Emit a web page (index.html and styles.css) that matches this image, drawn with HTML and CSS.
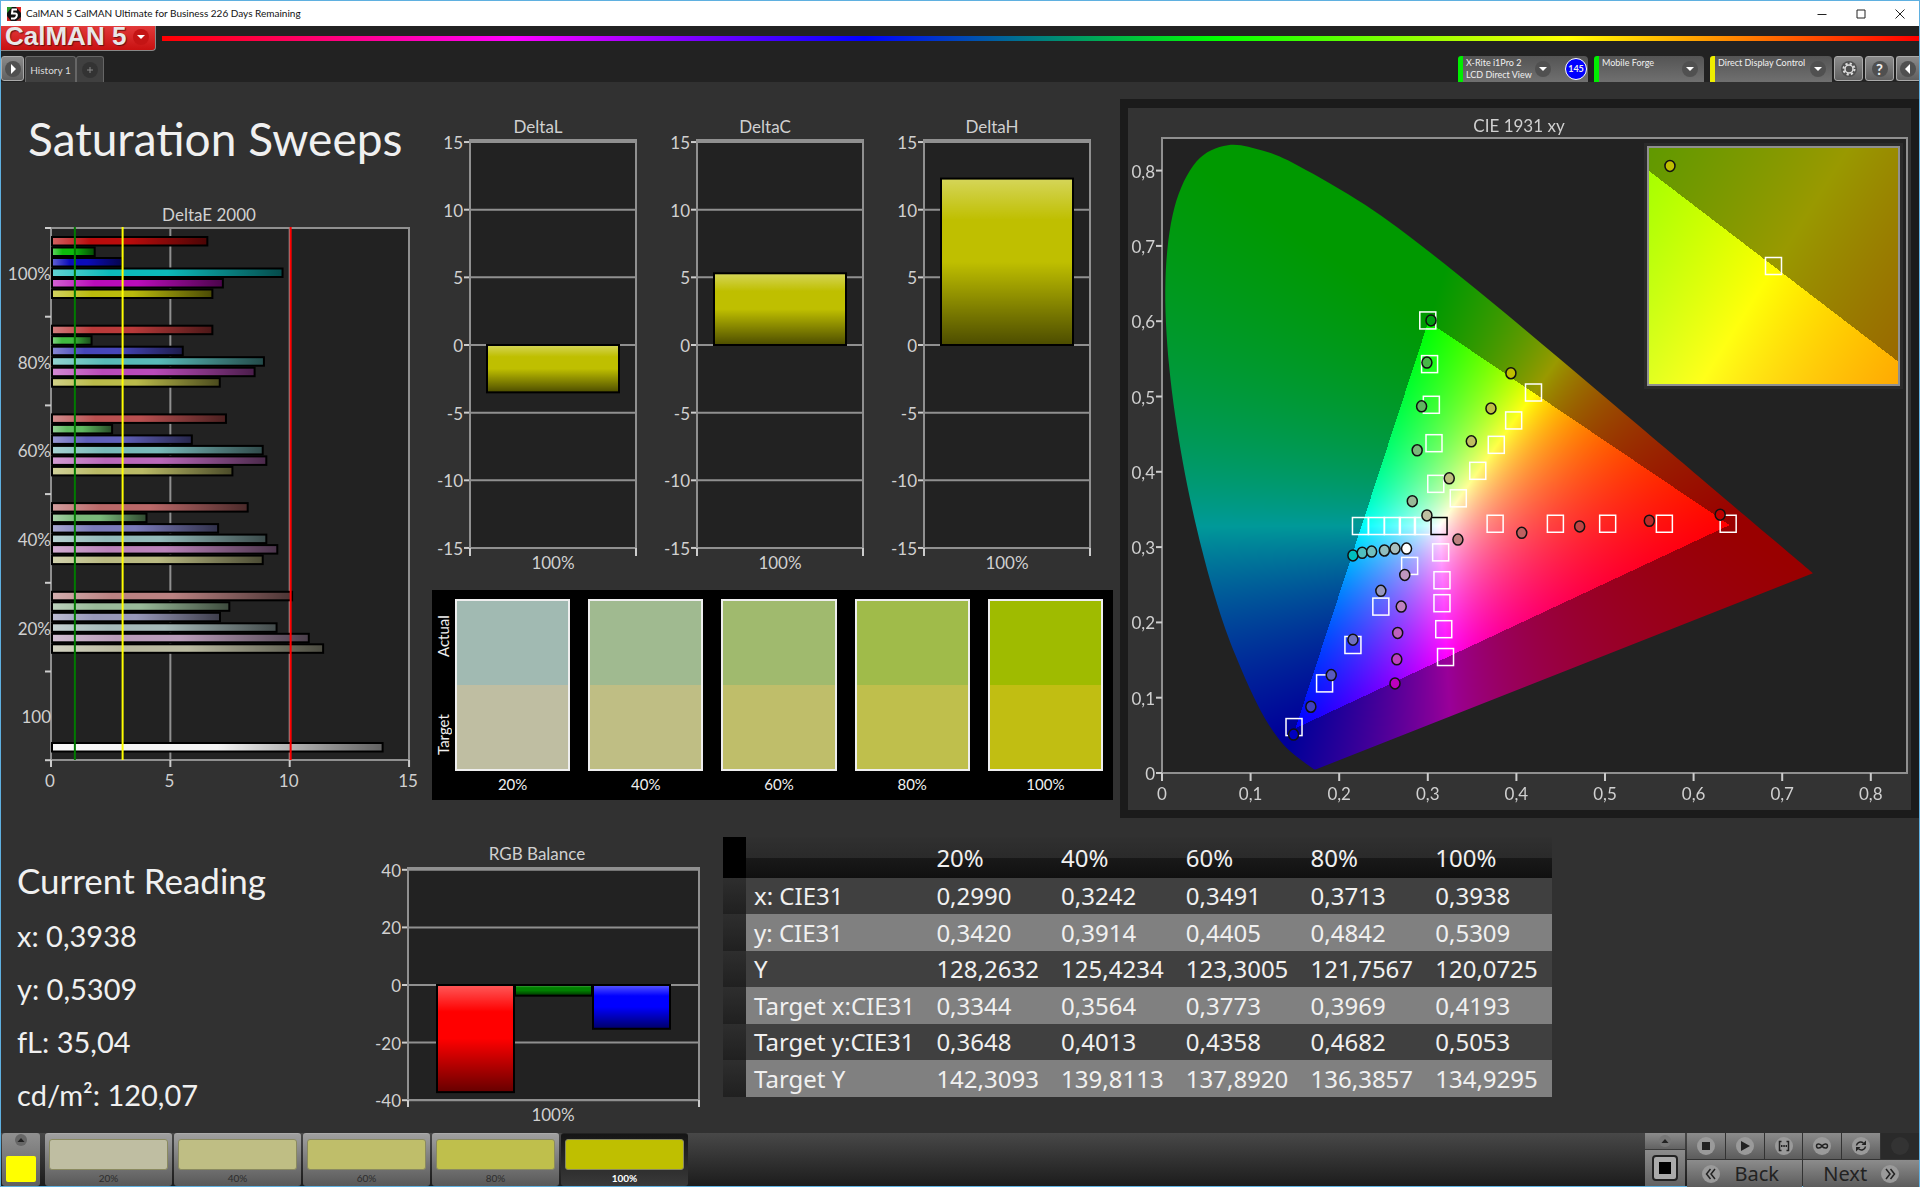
FILE: index.html
```
<!DOCTYPE html>
<html lang="en">
<head>
<meta charset="utf-8">
<meta name="viewport" content="width=device-width, initial-scale=1">
<title>CalMAN 5</title>
<link rel="stylesheet" href="styles.css">
</head>
<body>
<div class="app">
  <div class="titlebar">
    <svg class="app-icon" viewBox="0 0 14 14">
      <rect width="14" height="14" fill="#111"/>
      <path d="M0 0h5L0 6z" fill="#2a9d2a"/><path d="M14 0v6L9 0z" fill="#d22"/><path d="M0 14V9l4 5z" fill="#c22"/><path d="M14 14h-5l5-4z" fill="#933"/>
      <path d="M10 2.500H5.500L5 6.500h3.200q2 0 1.600 2.200T7.500 11.500H4" fill="none" stroke="#fff" stroke-width="2"/>
    </svg>
    <span class="window-title">CalMAN 5 CalMAN Ultimate for Business 226 Days Remaining</span>
    <button class="win-btn" aria-label="Minimize"><svg viewBox="0 0 10 10"><path d="M0.500 5.500h9"/></svg></button>
    <button class="win-btn" aria-label="Maximize"><svg viewBox="0 0 10 10"><path d="M1 1h8v8H1z"/></svg></button>
    <button class="win-btn" aria-label="Close"><svg viewBox="0 0 10 10"><path d="M0.500 0.500l9 9M9.500 0.500l-9 9"/></svg></button>
  </div>

  <header class="header">
    <button class="logo">CalMAN 5 <span class="round"><svg viewBox="0 0 16 16"><path d="M4 6h8l-4 4z" fill="#fff"/></svg></span></button>
    <div class="rainbow"></div>
  </header>

  <nav class="toolbar">
    <button class="tool-btn tool-first" aria-label="Expand"><span class="round"><svg viewBox="0 0 16 16"><path d="M6 3l5 5-5 5z" fill="#fff"/></svg></span></button>
    <button class="tab">History 1</button>
    <button class="tab tab-add" aria-label="Add tab"><span class="round"><svg viewBox="0 0 16 16"><path d="M8 5v6M5 8h6" stroke="#888"/></svg></span></button>
    <div class="spacer"></div>
    <button class="device meter">
      <span class="device-name">X-Rite i1Pro 2<br>LCD Direct View</span>
      <span class="round"><svg viewBox="0 0 16 16"><path d="M4 6h8l-4 4z" fill="#fff"/></svg></span>
      <span class="count">145</span>
    </button>
    <div class="device source">
      <select aria-label="Source"><option>Mobile Forge</option></select>
      <span class="round"><svg viewBox="0 0 16 16"><path d="M4 6h8l-4 4z" fill="#fff"/></svg></span>
    </div>
    <div class="device display">
      <select aria-label="Display"><option>Direct Display Control</option></select>
      <span class="round"><svg viewBox="0 0 16 16"><path d="M4 6h8l-4 4z" fill="#fff"/></svg></span>
    </div>
    <button class="tool-btn" aria-label="Settings"><span class="round"><svg viewBox="0 0 16 16"><circle cx="8" cy="8" r="4" fill="none" stroke="#ddd" stroke-width="1.500"/><circle cx="8" cy="8" r="5.500" fill="none" stroke="#ddd" stroke-width="2" stroke-dasharray="2.200 2.120"/></svg></span></button>
    <button class="tool-btn help"><span class="round">?</span></button>
    <button class="tool-btn tool-last" aria-label="Collapse"><span class="round"><svg viewBox="0 0 16 16"><path d="M10 3L5 8l5 5z" fill="#fff"/></svg></span></button>
  </nav>

  <main class="main">
    <section class="top-row">
      <div class="col-left">
        <h1>Saturation Sweeps</h1>
        <svg class="chart" id="delta-e" viewBox="0 0 424 600"></svg>
      </div>
      <div class="col-middle">
        <div class="delta-charts">
          <svg class="chart" id="delta-l" viewBox="0 0 227 463"></svg>
          <svg class="chart" id="delta-c" viewBox="0 0 227 463"></svg>
          <svg class="chart" id="delta-h" viewBox="0 0 227 463"></svg>
        </div>
        <div class="compare">
          <div class="compare-side"><span>Target</span><span>Actual</span></div>
          <div class="patches">
            <figure class="patch"><div class="patch-box"><i class="a20"></i><i class="t20"></i></div><figcaption>20%</figcaption></figure>
            <figure class="patch"><div class="patch-box"><i class="a40"></i><i class="t40"></i></div><figcaption>40%</figcaption></figure>
            <figure class="patch"><div class="patch-box"><i class="a60"></i><i class="t60"></i></div><figcaption>60%</figcaption></figure>
            <figure class="patch"><div class="patch-box"><i class="a80"></i><i class="t80"></i></div><figcaption>80%</figcaption></figure>
            <figure class="patch"><div class="patch-box"><i class="a100"></i><i class="t100"></i></div><figcaption>100%</figcaption></figure>
          </div>
        </div>
      </div>
      <div class="cie">
        <canvas id="cie-gamut" width="783" height="702"></canvas>
        <svg class="chart" id="cie-points" viewBox="0 0 783 702"></svg>
      </div>
    </section>

    <section class="bottom-row">
      <div class="reading">
        <h2>Current Reading</h2>
        <p>x: 0,3938</p>
        <p>y: 0,5309</p>
        <p>fL: 35,04</p>
        <p>cd/m²: 120,07</p>
      </div>
      <svg class="chart rgb-chart" id="rgb-balance" viewBox="0 0 340 290"></svg>
      <div class="table-wrap">
        <table class="values">
          <thead>
            <tr><td></td><td></td><th>20%</th><th>40%</th><th>60%</th><th>80%</th><th>100%</th></tr>
          </thead>
          <tbody>
            <tr><td></td><th>x: CIE31</th><td>0,2990</td><td>0,3242</td><td>0,3491</td><td>0,3713</td><td>0,3938</td></tr>
            <tr><td></td><th>y: CIE31</th><td>0,3420</td><td>0,3914</td><td>0,4405</td><td>0,4842</td><td>0,5309</td></tr>
            <tr><td></td><th>Y</th><td>128,2632</td><td>125,4234</td><td>123,3005</td><td>121,7567</td><td>120,0725</td></tr>
            <tr><td></td><th>Target x:CIE31</th><td>0,3344</td><td>0,3564</td><td>0,3773</td><td>0,3969</td><td>0,4193</td></tr>
            <tr><td></td><th>Target y:CIE31</th><td>0,3648</td><td>0,4013</td><td>0,4358</td><td>0,4682</td><td>0,5053</td></tr>
            <tr><td></td><th>Target Y</th><td>142,3093</td><td>139,8113</td><td>137,8920</td><td>136,3857</td><td>134,9295</td></tr>
          </tbody>
        </table>
      </div>
    </section>
  </main>

  <footer class="footer">
    <button class="current" aria-label="Current color">
      <svg viewBox="0 0 12 12"><circle cx="6" cy="6" r="6" fill="#666"/><path d="M2.500 8L6 4l3.500 4z" fill="#222"/></svg>
      <i></i>
    </button>
    <button class="step"><i class="t20"></i>20%</button>
    <button class="step"><i class="t40"></i>40%</button>
    <button class="step"><i class="t60"></i>60%</button>
    <button class="step"><i class="t80"></i>80%</button>
    <button class="step active"><i class="t100"></i>100%</button>
    <div class="spacer"></div>
    <div class="pattern">
      <button aria-label="More"><svg viewBox="0 0 12 12"><circle cx="6" cy="6" r="6" fill="#777"/><path d="M2.500 8L6 4l3.500 4z" fill="#222"/></svg></button>
      <button class="window-btn" aria-label="Window"><svg viewBox="0 0 28 28"><rect x="2" y="2" width="24" height="24" rx="3" fill="#aaa" stroke="#222" stroke-width="2"/><rect x="8" y="8" width="12" height="12" fill="#000"/></svg></button>
    </div>
    <div class="transport">
      <button aria-label="Stop"><svg viewBox="0 0 18 18"><path d="M5 5h8v8H5z"/></svg></button>
      <button aria-label="Play"><svg viewBox="0 0 18 18"><path d="M5 4l9 5-9 5z"/></svg></button>
      <button aria-label="Series"><svg viewBox="0 0 18 18"><path class="line" d="M6.500 4.500h-2v9h2M11.500 4.500h2v9h-2"/><path d="M6 8h1.500v2H6zM8.300 8h1.500v2H8.300zM10.600 8H12v2h-1.400z"/></svg></button>
      <button aria-label="Continuous"><svg viewBox="0 0 18 18"><path class="line" d="M9 9C7.500 6.500 3.500 6 3.500 9S7.500 11.500 9 9s5.500-3 5.500 0S10.500 11.500 9 9z"/></svg></button>
      <button aria-label="Refresh"><svg viewBox="0 0 18 18"><path class="line" d="M4.500 8.500C5 5 9 4 11.500 6.200M13.500 9.500C13 13 9 14 6.500 11.800"/><path d="M14 3.500V8H9.500zM4 14.500V10h4.500z"/></svg></button>
      <button class="off" aria-label="Record" disabled><svg viewBox="0 0 18 18"></svg></button>
      <button class="wide back"><svg viewBox="0 0 18 18"><path class="line" d="M8.500 4l-4 5 4 5M13 4L9 9l4 5"/></svg>Back</button>
      <button class="wide">Next<svg viewBox="0 0 18 18"><path class="line" d="M9.500 4l4 5-4 5M5 4l4 5-4 5"/></svg></button>
    </div>
  </footer>
</div>
<script src="charts.js"></script>
</body>
</html>
```

FILE: styles.css
```
* {
  box-sizing: border-box;
}
body {
  margin: 0;
  background: #313131;
  font-family: Lato, Calibri, sans-serif;
  color: #f0f0f0;
}
button, select {
  font: inherit;
  color: inherit;
  border: none;
  margin: 0;
  padding: 0;
  background: none;
}
svg, canvas {
  display: block;
}
.app {
  min-height: 100vh;
  display: flex;
  flex-direction: column;
  border: 1px solid #5fb0e0;
}
.spacer {
  flex: 1;
}

/* window title */
.titlebar {
  height: 25px;
  background: #fff;
  color: #111;
  display: flex;
  align-items: center;
  padding-left: 6px;
  font-size: 10px;
}
.app-icon {
  width: 14px;
  height: 14px;
  margin-right: 5px;
}
.window-title {
  flex: 1;
  padding-bottom: 2px;
}
.win-btn {
  width: 39px;
  height: 25px;
  display: flex;
  align-items: center;
  justify-content: center;
}
.win-btn svg {
  width: 10px;
  height: 10px;
  fill: none;
  stroke: #222;
}

/* logo and spectrum */
.header {
  background: #222;
  display: flex;
  height: 30px;
}
.logo {
  width: 155px;
  height: 25px;
  display: flex;
  align-items: center;
  justify-content: space-between;
  padding: 0 6px 3px 4px;
  border: 1px solid #888;
  border-top: none;
  border-left: none;
  border-radius: 0 0 4px 0;
  background: linear-gradient(#e23a3a, #c81010);
  font: bold 26px "Liberation Sans", Arial, sans-serif;
  color: #e8e8e8;
  text-shadow: 1px 1px 1px #611;
}
.logo .round {
  background: #c41414;
}
.rainbow {
  flex: 1;
  height: 5px;
  margin: 10px 0 0 6px;
  background: linear-gradient(to right, #f00, #f0f 20%, #00f 40%, #0f0 60%, #ff0 80%, #f00);
}

/* tabs and devices */
.round {
  width: 16px;
  height: 16px;
  border-radius: 50%;
  background: #505050;
  flex: none;
}
.toolbar {
  height: 26px;
  background: #222;
  display: flex;
  font-size: 10px;
}
.tool-btn {
  width: 29px;
  height: 25px;
  margin-left: 2px;
  border: 1px solid #aaa;
  border-radius: 3px;
  background: linear-gradient(#8a8a8a, #606060);
  display: flex;
  align-items: center;
  justify-content: center;
}
.tool-first {
  width: 23px;
  margin: 0 1px 0 0;
}
.tool-last {
  width: 23px;
  border-right: none;
  border-radius: 3px 0 0 3px;
}
.help .round {
  font-size: 15px;
  font-weight: bold;
  line-height: 16px;
}
.tab {
  width: 51px;
  border: 1px solid #666;
  border-bottom: none;
  border-radius: 3px 3px 0 0;
  background: #404040;
  color: #ddd;
}
.tab-add {
  width: 28px;
  padding-left: 5px;
}
.tab-add .round {
  display: block;
  background: #333;
}
.device {
  display: flex;
  align-items: center;
  margin-right: 6px;
  padding-right: 6px;
  border-left: 5px solid #0e0;
  border-radius: 3px 4px 0 0;
  background: linear-gradient(#545454, #707070);
  font-size: 9px;
  text-align: left;
  line-height: 12px;
}
.device select {
  flex: 1;
  min-width: 0;
  height: 26px;
  padding: 0 0 12px 3px;
  appearance: none;
  line-height: 12px;
}
.meter {
  width: 130px;
  padding-right: 1px;
}
.device-name {
  flex: 1;
  padding-left: 3px;
  white-space: nowrap;
}
.count {
  flex: none;
  width: 22px;
  height: 22px;
  margin-left: 14px;
  border: 1px solid #fff;
  border-radius: 50%;
  background: #00f;
  font-weight: bold;
  line-height: 20px;
  text-align: center;
}
.source {
  width: 110px;
}
.display {
  width: 122px;
  margin-right: 0;
  border-left-color: #ee0;
}

/* charts */
.main {
  flex: 1;
}
.top-row {
  display: grid;
  grid-template-columns: 424fr 695fr 799fr;
  align-items: start;
}
h1 {
  margin: 0;
  padding: 29px 0 33px 27px;
  font-size: 46px;
  font-weight: normal;
  line-height: 56px;
}
.chart {
  width: 100%;
  height: auto;
}
.chart text {
  font-size: 17px;
  fill: #d0d0d0;
}
.chart .title, .chart .mid {
  text-anchor: middle;
}
.chart .end {
  text-anchor: end;
}
.chart .plot {
  fill: #222;
}
.chart .frame, .chart .grid {
  fill: none;
  stroke: #909090;
  stroke-width: 2;
}
.chart .tick {
  stroke: #ccc;
  stroke-width: 2;
}
.col-middle {
  padding: 30px 14px 0 0;
}
.delta-charts {
  display: grid;
  grid-template-columns: repeat(3, 1fr);
}
.compare {
  display: flex;
  margin: 15px -7px 0 7px;
  padding: 9px 10px 0 2px;
  height: 210px;
  background: #000;
}
.compare-side {
  display: flex;
  justify-content: space-between;
  width: 18px;
  height: 172px;
  margin-right: 3px;
  padding: 16px 0;
  writing-mode: vertical-rl;
  transform: rotate(180deg);
  font-size: 15px;
  line-height: 18px;
}
.patches {
  flex: 1;
  display: grid;
  grid-template-columns: repeat(5, 1fr);
  column-gap: 18px;
}
.patch {
  margin: 0;
  text-align: center;
  font-size: 15px;
}
.patch-box {
  height: 172px;
  border: 2px solid #eee;
  display: flex;
  flex-direction: column;
}
.patch-box i {
  flex: 1;
}
.patch figcaption {
  line-height: 26px;
}
.a20 { background: #a1bab2; }
.a40 { background: #a0ba90; }
.a60 { background: #a0ba6e; }
.a80 { background: #a0bb4a; }
.a100 { background: #9fbb00; }
.t20 { background: #bfbea2; }
.t40 { background: #bfbe84; }
.t60 { background: #bfbe6a; }
.t80 { background: #bfbf4c; }
.t100 { background: #c1be12; }
.cie {
  display: grid;
  margin-top: 17px;
  padding: 9px 8px 8px;
  background: #1b1b1b;
}
.cie > * {
  grid-area: 1 / 1;
  width: 100%;
  height: auto;
}
.cie canvas {
  background: #333;
}

/* readings */
.bottom-row {
  display: grid;
  grid-template-columns: 365fr 340fr 846fr 367fr;
  align-items: start;
}
.reading {
  padding: 40px 0 0 16px;
}
h2 {
  margin: 0 0 7px;
  font-size: 35px;
  font-weight: normal;
  line-height: 44px;
}
.reading p {
  margin: 0;
  font-size: 29px;
  line-height: 53px;
}
.rgb-chart {
  margin-top: 22px;
}
.table-wrap {
  padding: 19px 0 0 17px;
}
.values {
  width: 100%;
  table-layout: fixed;
  border-collapse: collapse;
  font: 24px "Noto Sans", "Segoe UI", sans-serif;
}
.values th, .values td {
  height: 36px;
  padding: 0 0 0 8px;
  font-weight: normal;
  line-height: 34px;
  text-align: left;
  white-space: nowrap;
}
.values thead td, .values thead th {
  height: 41px;
  background: linear-gradient(#303030, #2a2a2a 50%, #191919 50%, #101010);
}
.values tr > :first-child {
  width: 23px;
  padding: 0;
  background: linear-gradient(#2e2e2e, #202020);
}
.values thead tr > :first-child {
  background: #000;
}
.values tr > :nth-child(2) {
  width: 22%;
}
.values tbody tr {
  background: #404040;
}
.values tbody tr:nth-child(even) {
  background: #808080;
}
.values tbody tr:nth-child(even) td {
  height: 37px;
}

/* bottom bar */
.footer {
  height: 53px;
  display: flex;
  gap: 2px;
  padding-left: 1px;
  background: linear-gradient(#484848, #1c1c1c);
}
.current {
  width: 38px;
  margin-right: 3px;
  border-radius: 3px;
  background: linear-gradient(#909090, #606060);
  display: flex;
  flex-direction: column;
  align-items: center;
  justify-content: space-between;
  padding: 1px 0 4px;
}
.current svg {
  width: 12px;
  height: 12px;
}
.current i {
  width: 30px;
  height: 26px;
  border-radius: 2px;
  background: #ff0;
}
.step {
  width: 127px;
  padding: 4px 4px 0;
  border-top: 1px solid #aaa;
  border-radius: 3px;
  background: linear-gradient(#a0a0a0, #585858);
  color: #2c2c2c;
  font-size: 10px;
  line-height: 16px;
}
.step i {
  display: block;
  height: 31px;
  border: 1px solid #8a8a60;
  border-radius: 3px;
}
.step.active {
  border-color: #222;
  background: linear-gradient(#151515, #3a3a3a);
  color: #fff;
  font-weight: bold;
}
.step .t100 {
  background: #bfbf00;
}
.pattern {
  width: 40px;
  display: grid;
  grid-template-rows: 16px 1fr;
  gap: 1px;
}
.pattern button {
  display: flex;
  align-items: center;
  justify-content: center;
  background: linear-gradient(#8c8c8c, #626262);
}
.pattern svg {
  width: 12px;
}
.pattern .window-btn svg {
  width: 28px;
}
.transport {
  width: 232px;
  display: grid;
  grid-template-columns: repeat(6, 1fr);
  grid-template-rows: 26px 1fr;
  gap: 1px;
  background: #333;
}
.transport button {
  display: flex;
  align-items: center;
  justify-content: center;
  background: linear-gradient(#8c8c8c, #5c5c5c);
  color: #222;
}
.transport svg {
  width: 18px;
  height: 18px;
  border-radius: 50%;
  background: #9a9a9a;
  fill: #222;
}
.transport .line {
  fill: none;
  stroke: #222;
  stroke-width: 1.500;
}
.transport .off {
  background: #2a2a2a;
}
.transport .off svg {
  background: #333;
}
.transport .wide {
  grid-column: span 3;
  gap: 14px;
  font: 20px "Noto Sans", "Segoe UI", sans-serif;
}
.transport .back {
  padding-right: 8px;
}
```

FILE: charts.js
```
// shared shading laid over every bar
const shade = (id, dir) => `
  <linearGradient id="${id}" x1="0" y1="0" x2="${dir === 'h' ? 1 : 0}" y2="${dir === 'h' ? 0 : 1}">
    <stop offset="0" stop-color="#fff" stop-opacity="0.35"/>
    <stop offset="0.25" stop-color="#fff" stop-opacity="0"/>
    <stop offset="0.5" stop-color="#000" stop-opacity="0"/>
    <stop offset="1" stop-color="#000" stop-opacity="0.6"/>
  </linearGradient>`;

const line = (x1, y1, x2, y2, cls) => `<line x1="${x1}" y1="${y1}" x2="${x2}" y2="${y2}" class="${cls}"/>`;
const text = (x, y, str, cls) => `<text x="${x}" y="${y}" class="${cls}">${str}</text>`;
const bar = (x, y, w, h, color, grad) =>
  `<rect x="${x}" y="${y}" width="${w}" height="${h}" fill="${color}"/>
   <rect x="${x}" y="${y}" width="${w}" height="${h}" fill="url(#${grad})" stroke="#000" stroke-width="2"/>`;

function drawDeltaE() {
  const data = [
    ['100%', [6.55, 1.83, 2.99, 9.7, 7.2, 6.76], ['#ba0c0c', '#0cba0c', '#0c0cba', '#0cbaba', '#ba0cba', '#baba0c']],
    ['80%', [6.76, 1.7, 5.52, 8.92, 8.53, 7.07], ['#ba3a3a', '#40ba40', '#4646ba', '#58bab8', '#ba4aba', '#baba4a']],
    ['60%', [7.33, 2.56, 5.9, 8.87, 9.02, 7.6], ['#ba5050', '#60ba60', '#6060ba', '#78baba', '#ba68ba', '#baba66']],
    ['40%', [8.24, 4.0, 7.0, 9.02, 9.48, 8.87], ['#ba6868', '#7aba7a', '#7a7aba', '#92baba', '#ba82ba', '#baba82']],
    ['20%', [10.1, 7.47, 7.08, 9.45, 10.8, 11.4], ['#ba8282', '#98ba98', '#9898ba', '#a6baba', '#ba9cba', '#babaa0']]
  ];
  const x0 = 50, top = 28, bottom = 560, unit = 23.87, group = 88.7;
  let s = `<defs>${shade('h-e', 'h')}</defs>`;
  s += text(208, 21, 'DeltaE 2000', 'title');
  s += `<rect x="${x0}" y="${top}" width="358" height="${bottom - top}" class="plot"/>`;
  [5, 10].forEach(v => s += line(x0 + v * unit, top, x0 + v * unit, bottom, 'grid'));
  s += `<rect x="${x0}" y="${top}" width="358" height="${bottom - top}" class="frame"/>`;
  [0, 5, 10, 15].forEach(v => {
    s += line(x0 + v * unit, bottom, x0 + v * unit, bottom + 7, 'tick');
    s += text(x0 - 1 + v * unit, 587, v, 'mid');
  });
  for (let i = 0; i < 7; i++) {
    s += line(x0 - 6, top + i * group, x0, top + i * group, 'tick');
  }
  data.forEach(([label, values, colors], g) => {
    s += text(x0, 80 + g * group, label, 'end');
    values.forEach((v, i) => {
      s += bar(x0 + 1, 37 + g * group + i * 10.5, v * unit - 1, 8.5, colors[i], 'h-e');
    });
  });
  s += text(x0, 523, '100', 'end');
  s += bar(x0 + 1, 543, 13.85 * unit, 8.5, '#f4f4f4', 'h-e');
  [[1, '#007a00'], [3, '#ff0'], [10.04, '#f00']].forEach(([v, c]) => {
    s += `<line x1="${x0 + v * unit}" y1="${top - 1}" x2="${x0 + v * unit}" y2="${bottom}" stroke="${c}" stroke-width="2"/>`;
  });
  document.getElementById('delta-e').innerHTML = s;
}

function drawDelta(id, title, value) {
  const x0 = 45, right = 211, zero = 233, unit = 13.53;
  let s = `<defs>${shade('v-' + id, 'v')}</defs>`;
  s += text(113, 21, title, 'title');
  s += `<rect x="${x0}" y="28" width="${right - x0}" height="408" class="plot"/>`;
  for (let v = -15; v <= 15; v += 5) {
    const y = zero - v * unit;
    s += line(x0, y, right, y, 'grid');
    s += line(x0 - 6, y, x0, y, 'tick');
    s += text(x0 - 7, y + 7, v, 'end');
  }
  s += `<rect x="${x0}" y="28" width="${right - x0}" height="408" class="frame"/>`;
  s += line(x0, 436, x0, 444, 'tick') + line(right, 436, right, 444, 'tick');
  s += text(128, 457, '100%', 'mid');
  const h = Math.abs(value) * unit;
  s += bar(62, value > 0 ? zero - h : zero, 132, h, '#bfbf00', 'v-' + id);
  document.getElementById(id).innerHTML = s;
}

function drawRgb() {
  const x0 = 42, right = 333, zero = 145, unit = 2.88;
  let s = `<defs>${shade('v-rgb', 'v')}</defs>`;
  s += text(171, 20, 'RGB Balance', 'title');
  s += `<rect x="${x0}" y="28" width="${right - x0}" height="232" class="plot"/>`;
  for (let v = -40; v <= 40; v += 20) {
    const y = zero - v * unit;
    s += line(x0, y, right, y, 'grid');
    s += line(x0 - 6, y, x0, y, 'tick');
    s += text(x0 - 7, y + 7, v, 'end');
  }
  s += `<rect x="${x0}" y="28" width="${right - x0}" height="232" class="frame"/>`;
  s += line(x0, 260, x0, 267, 'tick') + line(right, 260, right, 267, 'tick');
  s += text(187, 281, '100%', 'mid');
  [[37.2, '#f00'], [3.7, '#008000'], [15.2, '#00f']].forEach(([v, c], i) => {
    s += bar(71 + i * 78, zero, 77, v * unit, c, 'v-rgb');
  });
  document.getElementById('rgb-balance').innerHTML = s;
}

// CIE 1931 chromaticity diagram
const cie = { left: 34, top: 30, right: 779, bottom: 665, zeroY: 665, sx: 886, sy: 753 };
const inset = { left: 520, top: 39, width: 251, height: 238, x: 0.4193, y: 0.5053, sx: 4060, sy: 3910 };
const locus = [
  [.1741, .005], [.1714, .0051], [.1644, .0109], [.1566, .0177], [.144, .0297], [.1355, .0399], [.1241, .0578],
  [.1096, .0868], [.0913, .1327], [.0687, .2007], [.0454, .295], [.0235, .4127], [.0082, .5384], [.0039, .6548],
  [.0139, .7502], [.0389, .812], [.0743, .8338], [.1142, .8262], [.1547, .8059], [.2296, .7543], [.3016, .6923],
  [.3731, .6245], [.4441, .5547], [.5125, .4866], [.5752, .4242], [.627, .3725], [.6915, .3083], [.7347, .2653]
];
const px = x => cie.left + x * cie.sx;
const py = y => cie.zeroY - y * cie.sy;

function chromaColor(x, y) {
  const z = 1 - x - y;
  const r = 3.2406 * x - 1.5372 * y - 0.4986 * z;
  const g = -0.9689 * x + 1.8758 * y + 0.0415 * z;
  const b = 0.0557 * x - 0.204 * y + 1.057 * z;
  const level = (r < 0 || g < 0 || b < 0 ? 153 : 255) / Math.max(r, g, b);
  return [r, g, b].map(c => Math.max(0, c) * level);
}

function paint(width, height, toXY) {
  const c = document.createElement('canvas');
  c.width = width;
  c.height = height;
  const ctx = c.getContext('2d');
  const img = ctx.createImageData(width, height);
  for (let j = 0; j < height; j++) {
    for (let i = 0; i < width; i++) {
      const [x, y] = toXY(i, j);
      const rgb = chromaColor(x, y);
      img.data.set([rgb[0], rgb[1], rgb[2], 255], (j * width + i) * 4);
    }
  }
  ctx.putImageData(img, 0, 0);
  return c;
}

// smooth curve that passes through every locus point
function traceLocus(ctx) {
  const p = locus.map(([x, y]) => [px(x), py(y)]);
  ctx.beginPath();
  ctx.moveTo(...p[0]);
  for (let i = 0; i < p.length - 1; i++) {
    const a = p[Math.max(i - 1, 0)], b = p[i], c = p[i + 1], d = p[Math.min(i + 2, p.length - 1)];
    ctx.bezierCurveTo(
      b[0] + (c[0] - a[0]) / 6, b[1] + (c[1] - a[1]) / 6,
      c[0] - (d[0] - b[0]) / 6, c[1] - (d[1] - b[1]) / 6,
      c[0], c[1]
    );
  }
  ctx.closePath();
}

function drawGamut() {
  const ctx = document.getElementById('cie-gamut').getContext('2d');
  ctx.fillStyle = '#222';
  ctx.fillRect(cie.left, cie.top, cie.right - cie.left, cie.bottom - cie.top);
  ctx.save();
  traceLocus(ctx);
  ctx.clip();
  ctx.drawImage(paint(783, 702, (i, j) => [(i - cie.left) / cie.sx, (cie.zeroY - j) / cie.sy]), 0, 0);
  ctx.restore();
  ctx.fillStyle = '#2b2b2b';
  ctx.fillRect(inset.left - 4, inset.top - 4, inset.width + 8, inset.height + 8);
  ctx.drawImage(paint(inset.width, inset.height, (i, j) => [
    inset.x + (i - inset.width / 2) / inset.sx,
    inset.y - (j - inset.height / 2) / inset.sy
  ]), inset.left, inset.top);
}

function drawPoints() {
  const targets = [
    [.3, .601], [.302, .543], [.304, .489], [.307, .438], [.309, .384],
    [.4193, .5053], [.3969, .4682], [.3773, .4358], [.3564, .4013], [.3344, .3648],
    [.224, .328], [.242, .328], [.26, .328], [.277, .328], [.294, .328],
    [.376, .331], [.444, .331], [.503, .331], [.567, .331], [.639, .331],
    [.3145, .293], [.316, .256], [.316, .2255], [.318, .191], [.32, .154],
    [.2795, .275], [.247, .221], [.2155, .17], [.1835, .119], [.149, .061]
  ];
  const actual = [
    [.3036, .601, '#00a010'], [.299, .545, '#47b747'], [.293, .487, '#60b560'], [.288, .4286, '#7ab87a'], [.2825, .361, '#97b997'],
    [.3938, .5309, '#bfbf00'], [.3713, .4842, '#bdbd45'], [.3491, .4405, '#bebe60'], [.3242, .3914, '#bebe80'], [.299, .342, '#bebea0'],
    [.2155, .289, '#00bebe'], [.226, .2925, '#50bebe'], [.2366, .294, '#70bebe'], [.251, .2955, '#90bebe'], [.263, .298, '#a8bebe'], [.276, .298, '#fff'],
    [.334, .31, '#be8080'], [.406, .319, '#be6060'], [.4714, .3275, '#be4545'], [.55, .335, '#be2a2a'], [.63, .343, '#be0000'],
    [.274, .263, '#be96be'], [.27, .221, '#be80be'], [.266, .186, '#be60be'], [.265, .151, '#be40be'], [.263, .119, '#be00be'],
    [.247, .242, '#9696be'], [.2155, .177, '#7070be'], [.191, .13, '#5a5abe'], [.168, .088, '#4040be'], [.1485, .051, '#0000be']
  ];
  const square = (x, y, c) => `<rect x="${x - 8}" y="${y - 8.5}" width="16" height="17" fill="none" stroke="${c}" stroke-width="1.5"/>`;
  const dot = (x, y, c) => `<ellipse cx="${x}" cy="${y}" rx="5" ry="5.5" fill="${c}" stroke="#111" stroke-width="1.5"/>`;
  let s = text(391, 24, 'CIE 1931 xy', 'title');
  s += `<rect x="${cie.left}" y="${cie.top}" width="${cie.right - cie.left}" height="${cie.bottom - cie.top}" class="frame"/>`;
  for (let i = 0; i <= 8; i++) {
    const label = i ? '0,' + i : '0';
    s += line(px(i / 10), cie.bottom, px(i / 10), cie.bottom + 8, 'tick');
    s += text(px(i / 10), 692, label, 'mid');
    s += line(cie.left - 6, py(i / 10), cie.left, py(i / 10), 'tick');
    s += text(cie.left - 7, py(i / 10) + 7, label, 'end');
  }
  targets.forEach(([x, y]) => s += square(px(x), py(y), '#fff'));
  s += square(px(.3127), py(.328), '#000');
  actual.forEach(([x, y, c]) => s += dot(px(x), py(y), c));
  s += `<rect x="${inset.left}" y="${inset.top}" width="${inset.width}" height="${inset.height}" class="frame"/>`;
  const cx = inset.left + inset.width / 2, cy = inset.top + inset.height / 2;
  s += square(cx, cy, '#fff');
  s += dot(cx + (.3938 - inset.x) * inset.sx, cy - (.5309 - inset.y) * inset.sy, '#bfbf00');
  document.getElementById('cie-points').innerHTML = s;
}

drawDeltaE();
drawDelta('delta-l', 'DeltaL', -3.5);
drawDelta('delta-c', 'DeltaC', 5.3);
drawDelta('delta-h', 'DeltaH', 12.3);
drawRgb();
drawGamut();
drawPoints();
```
